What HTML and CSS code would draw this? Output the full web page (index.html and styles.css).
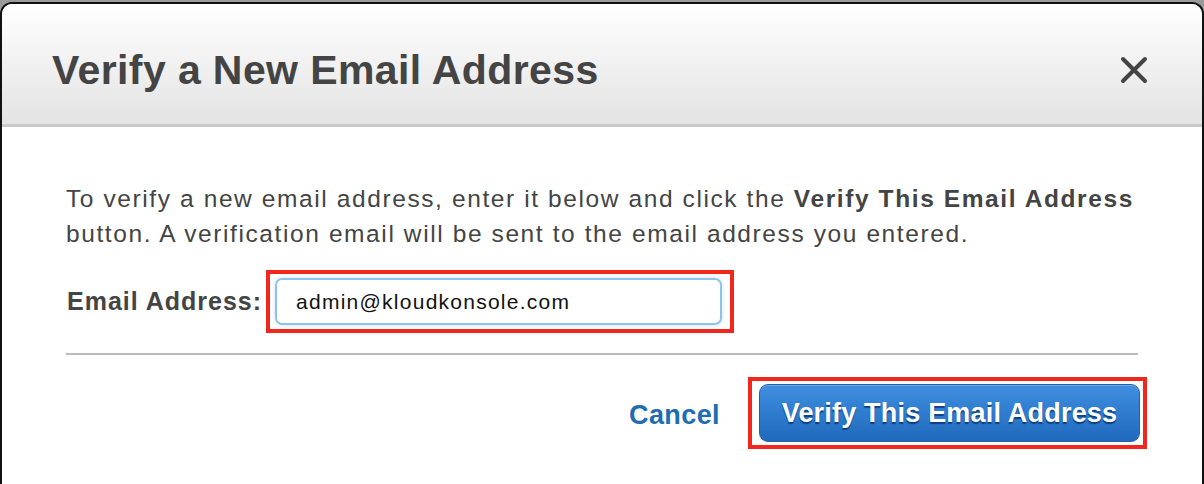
FILE: index.html
```html
<!DOCTYPE html>
<html>
<head>
<meta charset="utf-8">
<link rel="stylesheet" href="styles.css">
</head>
<body>
<div class="dialog">
  <div class="header">
    <h1 class="title">Verify a New Email Address</h1>
    <span class="close" aria-label="Close">
      <svg width="28" height="28" viewBox="0 0 28 28"><path d="M3 3 L25 25 M25 3 L3 25" stroke="#444" stroke-width="4" stroke-linecap="round"/></svg>
    </span>
  </div>
  <div class="body">
    <p class="intro">To verify a new email address, enter it below and click the <b>Verify This Email Address</b> button. A verification email will be sent to the email address you entered.</p>
    <div class="field">
      <label class="label">Email Address:</label>
      <div class="hl hl-input"><div class="input">admin@kloudkonsole.com</div></div>
    </div>
    <div class="rule"></div>
    <div class="actions">
      <span class="cancel">Cancel</span>
      <div class="hl hl-btn"><div class="btn">Verify This Email Address</div></div>
    </div>
  </div>
</div>
</body>
</html>
```

FILE: styles.css
```css
html, body { margin: 0; padding: 0; }
body {
  background: #9a9a9a;
  font-family: "Liberation Sans", Arial, Helvetica, sans-serif;
  width: 1204px;
  height: 484px;
  overflow: hidden;
}
.dialog {
  margin-top: 2px;
  height: 500px;
  background: #fff;
  border: 2px solid #111;
  border-bottom: none;
  border-radius: 12px 12px 0 0;
  box-sizing: border-box;
}
.header {
  height: 123px;
  box-sizing: border-box;
  border-bottom: 3px solid #cacaca;
  background: linear-gradient(#ffffff, #e3e3e3);
  border-radius: 10px 10px 0 0;
  display: flex;
  align-items: center;
  justify-content: space-between;
  padding: 12px 54px 0 50px;
}
.title {
  margin: 0;
  font-size: 41px;
  font-weight: bold;
  color: #444;
  letter-spacing: 0.4px;
}
.close { display: flex; }
.body { padding: 54px 64px 0 64px; }
.intro {
  margin: 0;
  font-size: 24.5px;
  line-height: 35px;
  color: #444;
  letter-spacing: 1.6px;
  width: 1090px;
}
.intro b { color: #444; }
.field {
  display: flex;
  align-items: center;
  margin-top: 19px;
}
.label {
  font-size: 25px;
  font-weight: bold;
  color: #444;
  margin-left: 1px;
  margin-right: 4px;
  letter-spacing: 1px;
}
.hl {
  border: 4px solid #f1271d;
}
.hl-input { padding: 4px 8px 4px 5px; }
.input {
  width: 447px;
  height: 47px;
  box-sizing: border-box;
  border: 2px solid #8ec3ee;
  border-radius: 7px;
  padding-left: 19px;
  font-size: 21px;
  letter-spacing: 1.25px;
  color: #111;
  display: flex;
  align-items: center;
  box-shadow: 0 0 4px rgba(110,170,230,.35);
}
.rule {
  height: 2px;
  background: #bbb;
  margin-top: 20px;
  width: 1072px;
}
.actions {
  display: flex;
  justify-content: flex-end;
  align-items: center;
  margin-top: 22px;
  width: 1081px;
  gap: 28px;
}
.cancel {
  font-size: 27px;
  font-weight: bold;
  color: #1d6db3;
  margin-top: 4px;
  letter-spacing: 0.4px;
}
.hl-btn { padding: 3px 3px 3px 7px; }
.btn {
  width: 381px;
  height: 58px;
  box-sizing: border-box;
  border: 1px solid #2460a8;
  border-radius: 9px;
  background: linear-gradient(#3f8fe0, #2069bd);
  color: #fff;
  font-size: 27px;
  font-weight: bold;
  letter-spacing: 0.2px;
  display: flex;
  align-items: center;
  justify-content: center;
  text-shadow: 0 2px 1px rgba(0,40,100,.7);
  box-shadow: inset 0 1px 0 rgba(255,255,255,.25);
}
```
